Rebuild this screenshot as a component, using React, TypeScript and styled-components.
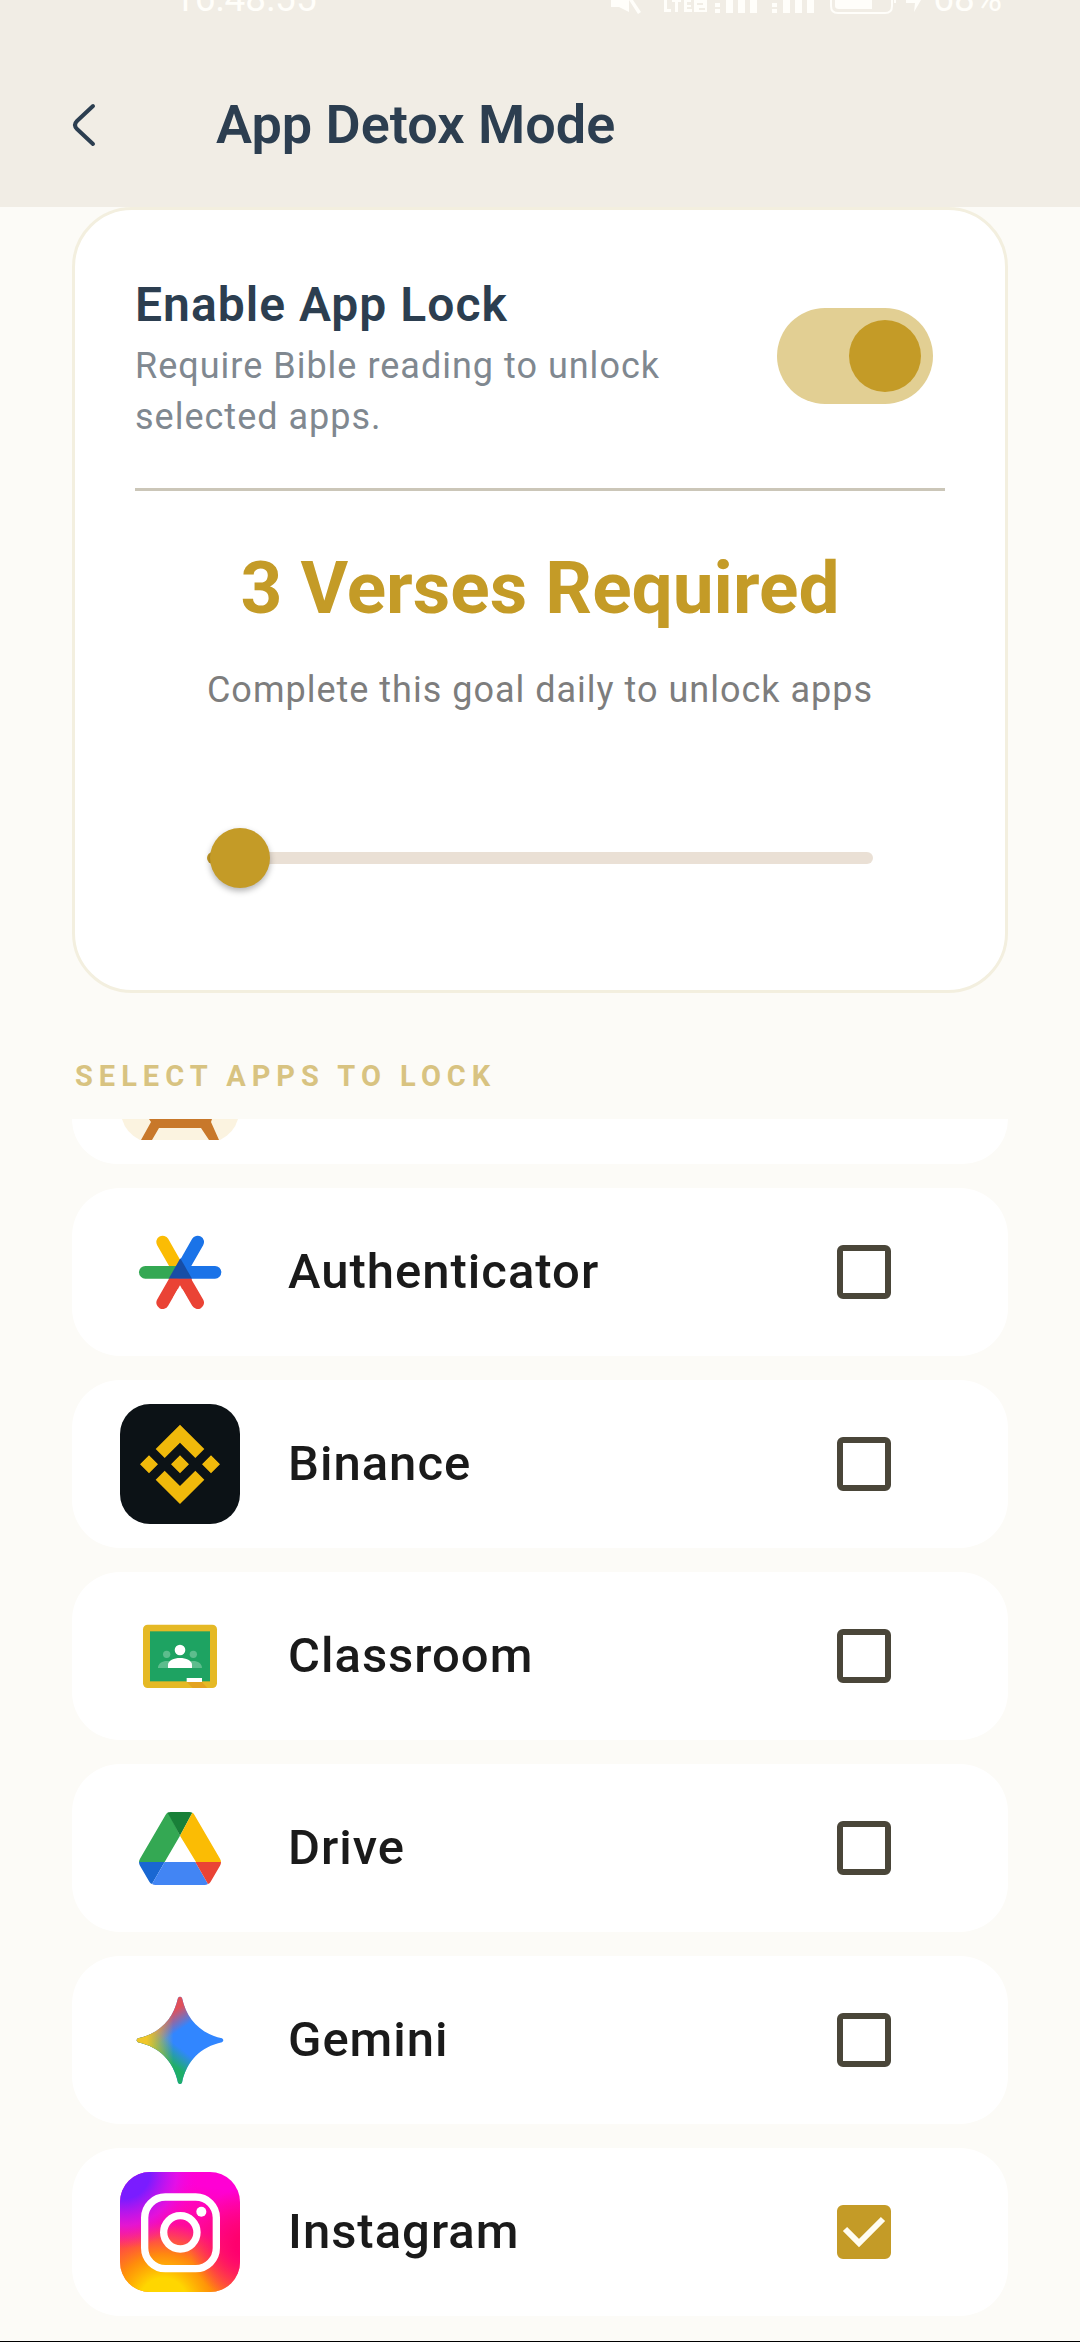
import * as React from 'react';
import styled, { createGlobalStyle, css } from 'styled-components';

const GOLD = '#c49b27';
const NAVY = '#2c3e50';

const GlobalStyle = createGlobalStyle`
  * {
    box-sizing: border-box;
  }

  body {
    margin: 0;
    background: #fcfbf7;
    font-family: Roboto, 'Liberation Sans', sans-serif;
  }
`

/* ---------- Layout ---------- */

const Screen = styled.div`
  display: flex;
  flex-direction: column;
  height: 100vh;
  overflow: hidden;
  background: #fcfbf7;
  border-bottom: 1px solid #000;
`

const Header = styled.header`
  flex: none;
  background: #f1ede5;
`

const StatusBar = styled.div`
  display: flex;
  align-items: flex-end;
  height: 14px;
  padding: 0 78px 0 174px;
  overflow: hidden;
  color: #fffefa;
  font-size: 37px;
  line-height: 30px;
`

const Clock = styled.span`
  flex: 1;
`

const StatusIcons = styled.svg`
  width: 324px;
  height: 14px;
`

const TitleBar = styled.div`
  display: flex;
  align-items: center;
  height: 193px;
  padding: 28px 60px 0;
`

const BackButton = styled.button`
  display: flex;
  width: 48px;
  height: 48px;
  margin-right: 108px;
  padding: 0;
  border: 0;
  background: none;
  color: ${NAVY};
`

const Title = styled.h1`
  margin: 0;
  color: ${NAVY};
  font-size: 54px;
  font-weight: 600;
  line-height: 72px;
`

const Content = styled.main`
  display: flex;
  flex: 1;
  flex-direction: column;
  min-height: 0;
  padding: 0 72px;
`

/* ---------- Goal card ---------- */

const Card = styled.section`
  flex: none;
  padding: 59px 60px 60px;
  border: 3px solid #f3efdf;
  border-radius: 60px;
  background: #fff;
`

const LockRow = styled.div`
  display: flex;
  align-items: center;
  justify-content: space-between;
  margin-bottom: 46px;
  padding: 0 12px 45px 0;
  border-bottom: 3px solid #cbc6b8;
`

const LockText = styled.div`
  width: 560px;
`

const LockTitle = styled.label`
  display: block;
  color: ${NAVY};
  font-size: 48px;
  font-weight: 600;
  line-height: 72px;
  letter-spacing: 1px;
`

const Caption = styled.p<{ $center?: boolean }>`
  margin: 0;
  color: #808890;
  font-size: 36px;
  line-height: 51px;
  letter-spacing: 1px;
  ${p => p.$center && css`
    color: #7d7d7d;
    text-align: center;
  `};
`

const Switch = styled.input`
  appearance: none;
  display: flex;
  align-items: center;
  width: 156px;
  height: 96px;
  margin: 0;
  padding: 0 12px;
  border-radius: 48px;
  background: #ddd8cc;

  &::before {
    content: '';
    width: 72px;
    height: 72px;
    border-radius: 50%;
    background: #fff;
  }

  &:checked {
    justify-content: flex-end;
    background: #e2cf93;
  }

  &:checked::before {
    background: ${GOLD};
  }
`

const Goal = styled.h2`
  margin: 0 0 26px;
  color: ${GOLD};
  font-size: 73px;
  font-weight: 700;
  line-height: 102px;
  text-align: center;
`

const SliderBox = styled.div`
  display: flex;
  align-items: center;
  height: 144px;
  margin-top: 70px;
  padding: 0 72px;
`

const Slider = styled.input`
  appearance: none;
  width: 100%;
  height: 60px;
  margin: 0;
  background: none;

  &::-webkit-slider-runnable-track {
    height: 12px;
    border-radius: 6px;
    background: linear-gradient(to right, ${GOLD} var(--fill), #eae0d5 var(--fill));
  }

  &::-webkit-slider-thumb {
    appearance: none;
    width: 60px;
    height: 60px;
    margin-top: -24px;
    border-radius: 50%;
    background: ${GOLD};
    box-shadow: 0 3px 6px rgba(0, 0, 0, 0.3);
  }
`

/* ---------- App list ---------- */

const SectionLabel = styled.h3`
  flex: none;
  margin: 62px 0 22px;
  padding-left: 3px;
  color: #d8c381;
  font-size: 29px;
  font-weight: 700;
  line-height: 42px;
  letter-spacing: 6px;
`

const AppList = styled.ul`
  display: flex;
  flex: 1;
  flex-direction: column;
  gap: 24px;
  min-height: 0;
  margin: 0;
  padding: 0;
  overflow: hidden;
  list-style: none;
`

const AppRow = styled.li`
  display: flex;
  flex: none;
  align-items: center;
  gap: 48px;
  height: 168px;
  padding: 0 117px 0 48px;
  border-radius: 48px;
  background: #fff;
`

// Row scrolled half out of the list, only its lower edge shows
const CutRow = styled.li`
  display: flex;
  flex: none;
  height: 45px;
  padding: 0 48px 24px;
  border-radius: 0 0 45px 45px;
  background: #fff;
`

const AppIcon = styled.svg`
  flex: none;
  width: 120px;
  height: 120px;
  border-radius: 30px;
`

const AppName = styled.label`
  flex: 1;
  color: #1a1a1a;
  font-size: 49px;
  font-weight: 500;
  line-height: 72px;
  letter-spacing: 1px;
`

const CheckWrap = styled.span`
  display: grid;

  > * {
    grid-area: 1 / 1;
  }
`

const CheckBox = styled.input`
  appearance: none;
  width: 54px;
  height: 54px;
  margin: 0;
  border: 6px solid #4a4639;
  border-radius: 6px;

  &:checked {
    border-color: ${GOLD};
    background: ${GOLD};
  }

  & + svg {
    visibility: hidden;
    pointer-events: none;
  }

  &:checked + svg {
    visibility: visible;
  }
`

/* ---------- Icons ---------- */

const AuthenticatorIcon = () => (
  <AppIcon viewBox="0 0 360 360" fill="none" strokeWidth="38" strokeLinecap="round">
    <path d="M180 181L128 90" stroke="#fbbc04" />
    <path d="M76 181H170" stroke="#34a853" />
    <path d="M128 272L180 181L233 272" stroke="#ea4335" />
    <path d="M180 181H285M181 181L233 90" stroke="#1a73e8" />
    <path d="M181 139L146 200H216Z" fill="#174ea6" />
    <path d="M146 200H216L198 232H163Z" fill="#ea4335" />
    <path d="M180 220L160 256H200Z" fill="#fff" />
  </AppIcon>
)

const BinanceIcon = () => (
  <AppIcon viewBox="0 0 360 360">
    <rect width="360" height="360" fill="#0c1216" />
    <path
      fill="#f0b90b"
      d="M180 62L253 135L226 162L180 116L134 162L107 135ZM107 227L134 200L180 246L226 200L253 227L180 300Z
        M180 154L207 181L180 208L153 181ZM87 154L114 181L87 208L60 181ZM273 154L300 181L273 208L246 181Z"
    />
  </AppIcon>
)

const ClassroomIcon = () => (
  <AppIcon viewBox="0 0 360 360">
    <rect x="69" y="86" width="222" height="190" rx="14" fill="#e5b925" />
    <rect x="90" y="106" width="180" height="150" fill="#1ea362" />
    <g fill="#5dbd8d">
      <circle cx="140" cy="175" r="11" />
      <circle cx="220" cy="175" r="11" />
      <path d="M114 216C114 188 166 188 166 216ZM194 216C194 188 246 188 246 216Z" />
    </g>
    <circle cx="180" cy="162" r="16" fill="#fff" />
    <path d="M144 216V207C144 179 216 179 216 207V216Z" fill="#fff" />
    <rect x="200" y="246" width="46" height="12" fill="#fff" />
    <path d="M200 258H246L262 276H218Z" fill="#e3a320" />
  </AppIcon>
)

const DriveIcon = () => (
  <AppIcon viewBox="0 0 360 360">
    <path d="M145 73L180 143L134 222H57Q57 217 60 212L137 80Q140 75 145 73Z" fill="#34a853" />
    <path d="M143 74Q147 72 152 72H208Q213 72 217 74L180 143Z" fill="#188038" />
    <path d="M217 74Q221 76 223 80L300 212Q303 217 303 222H228L180 143Z" fill="#fbbc04" />
    <path d="M57 222H134L96 288Q91 286 88 281L60 233Q57 228 57 222Z" fill="#1967d2" />
    <path d="M134 222H226L264 288Q259 291 254 291H106Q101 291 96 288Z" fill="#4285f4" />
    <path d="M226 222H303Q303 228 300 233L272 281Q269 286 264 288Z" fill="#ea4335" />
  </AppIcon>
)

const STAR = 'M174 54Q180 46 186 54C200 118 242 161 306 175Q314 181 306 187C242 201 200 243 186 308Q180 316 174 308C160 243 118 201 54 187Q46 181 54 175C118 161 160 118 174 54Z';

const GeminiIcon = () => (
  <AppIcon viewBox="0 0 360 360">
    <defs>
      <linearGradient id="gem-red" gradientUnits="userSpaceOnUse" x1="148" y1="84" x2="188" y2="144">
        <stop offset="0.2" stopColor="#e0505a" />
        <stop offset="1" stopColor="#e0505a" stopOpacity="0" />
      </linearGradient>
      <linearGradient id="gem-green" gradientUnits="userSpaceOnUse" x1="145" y1="262" x2="186" y2="208">
        <stop offset="0.2" stopColor="#1fae68" />
        <stop offset="1" stopColor="#1fae68" stopOpacity="0" />
      </linearGradient>
      <linearGradient id="gem-yellow" gradientUnits="userSpaceOnUse" x1="60" y1="181" x2="160" y2="181">
        <stop offset="0.2" stopColor="#f0c62a" />
        <stop offset="1" stopColor="#f0c62a" stopOpacity="0" />
      </linearGradient>
    </defs>
    <path d={STAR} fill="#3186ff" />
    <path d={STAR} fill="url(#gem-red)" />
    <path d={STAR} fill="url(#gem-green)" />
    <path d={STAR} fill="url(#gem-yellow)" />
  </AppIcon>
)

const InstagramIcon = () => (
  <AppIcon viewBox="0 0 360 360">
    <defs>
      <linearGradient id="ig-base" gradientUnits="userSpaceOnUse" x1="220" y1="0" x2="160" y2="360">
        <stop offset="0.1" stopColor="#ff00d4" />
        <stop offset="0.45" stopColor="#ff0a9c" />
        <stop offset="0.7" stopColor="#ff3f50" />
        <stop offset="1" stopColor="#ff7a1a" />
      </linearGradient>
      <radialGradient id="ig-yellow" gradientUnits="userSpaceOnUse" cx="130" cy="390" r="240">
        <stop offset="0.3" stopColor="#ffd600" />
        <stop offset="0.6" stopColor="#ff9a00" stopOpacity="0.8" />
        <stop offset="1" stopColor="#ff5a30" stopOpacity="0" />
      </radialGradient>
      <radialGradient id="ig-purple" gradientUnits="userSpaceOnUse" cx="10" cy="0" r="230">
        <stop offset="0.35" stopColor="#7a1cff" />
        <stop offset="0.7" stopColor="#d815f0" stopOpacity="0.7" />
        <stop offset="1" stopColor="#ff00d4" stopOpacity="0" />
      </radialGradient>
      <radialGradient id="ig-pink" gradientUnits="userSpaceOnUse" cx="380" cy="220" r="170">
        <stop offset="0.2" stopColor="#ff006e" />
        <stop offset="1" stopColor="#ff006e" stopOpacity="0" />
      </radialGradient>
    </defs>
    <rect width="360" height="360" fill="url(#ig-base)" />
    <rect width="360" height="360" fill="url(#ig-yellow)" />
    <rect width="360" height="360" fill="url(#ig-pink)" />
    <rect width="360" height="360" fill="url(#ig-purple)" />
    <g fill="none" stroke="#fff" strokeWidth="22">
      <rect x="74" y="75" width="215" height="215" rx="62" />
      <circle cx="181" cy="181" r="50" />
    </g>
    <circle cx="244" cy="119" r="15" fill="#fff" />
  </AppIcon>
)

const apps = [
  { name: 'Authenticator', Icon: AuthenticatorIcon, locked: false },
  { name: 'Binance', Icon: BinanceIcon, locked: false },
  { name: 'Classroom', Icon: ClassroomIcon, locked: false },
  { name: 'Drive', Icon: DriveIcon, locked: false },
  { name: 'Gemini', Icon: GeminiIcon, locked: false },
  { name: 'Instagram', Icon: InstagramIcon, locked: true },
];

const MAX_VERSES = 700;

const App = () => {
  const [verses, setVerses] = React.useState(3);

  return (
    <Screen>
      <GlobalStyle />
      <Header>
        <StatusBar>
          <Clock>16:48:55</Clock>
          <StatusIcons viewBox="0 0 324 14" fill="#fffefa">
            <path d="M2 0H20V12L10 7H2ZM20 0H24L32 12L29 14Z" />
            <path d="M55 0H58V9H62V12H55ZM66 0H69V12H66ZM63 0H72V2H63ZM75 0H82V2H78V5H82V7H78V9H83V12H75Z" />
            <path fillRule="evenodd" d="M85 0H98V12H85ZM88 3H94V5H88ZM90 8H96V10H90Z" />
            <path d="M106 3H111V7H106ZM106 9H111V13H106ZM117 0H124V13H117ZM129 0H136V13H129ZM141 0H148V13H141Z" />
            <path d="M163 3H168V7H163ZM163 9H168V13H163ZM174 0H181V13H174ZM186 0H193V13H186ZM198 0H205V13H198Z" />
            <path d="M222 -8V6Q222 13 229 13H276Q283 13 283 6V-8" fill="none" stroke="#fffefa" strokeWidth="2" />
            <path d="M226 0H263V9H230Q226 9 226 6ZM285 0H287V3H285Z" />
            <path d="M297 0H312L305 12L306 3H297Z" />
          </StatusIcons>
          <span>68%</span>
        </StatusBar>
        <TitleBar>
          <BackButton aria-label="Back">
            <svg width="48" height="48" viewBox="0 0 48 48" fill="none" stroke="currentColor" strokeWidth="4" strokeLinecap="round">
              <path d="M33 5L17 20Q13 24 17 28L33 43" />
            </svg>
          </BackButton>
          <Title>App Detox Mode</Title>
        </TitleBar>
      </Header>
      <Content>
        <Card>
          <LockRow>
            <LockText>
              <LockTitle htmlFor="app-lock">Enable App Lock</LockTitle>
              <Caption>Require Bible reading to unlock selected apps.</Caption>
            </LockText>
            <Switch id="app-lock" type="checkbox" role="switch" defaultChecked />
          </LockRow>
          <Goal>{verses} Verses Required</Goal>
          <Caption $center>Complete this goal daily to unlock apps</Caption>
          <SliderBox>
            <Slider
              type="range"
              aria-label="Verses Required"
              min={0}
              max={MAX_VERSES}
              value={verses}
              onChange={e => setVerses(Number(e.target.value))}
              style={{ '--fill': `calc(30px + (100% - 60px) * ${verses / MAX_VERSES})` } as React.CSSProperties}
            />
          </SliderBox>
        </Card>
        <SectionLabel>SELECT APPS TO LOCK</SectionLabel>
        <AppList>
          <CutRow>
            <svg width="120" height="21" viewBox="0 0 120 21">
              <path d="M2 0H118Q114 14 100 21H20Q6 14 2 0Z" fill="#fbf3e0" />
              <path d="M29 0H92L91 3L99 21H89L81 9H39L32 21H21L31 3Z" fill="#c8782a" />
            </svg>
          </CutRow>
          {apps.map(({ name, Icon, locked }) => (
            <AppRow key={name}>
              <Icon />
              <AppName htmlFor={name}>{name}</AppName>
              <CheckWrap>
                <CheckBox id={name} type="checkbox" defaultChecked={locked} />
                <svg width="54" height="54" viewBox="0 0 54 54" fill="none" stroke="#fffdf2" strokeWidth="6">
                  <path d="M8 24L22 38L46 14" />
                </svg>
              </CheckWrap>
            </AppRow>
          ))}
        </AppList>
      </Content>
    </Screen>
  )
}

export default App
